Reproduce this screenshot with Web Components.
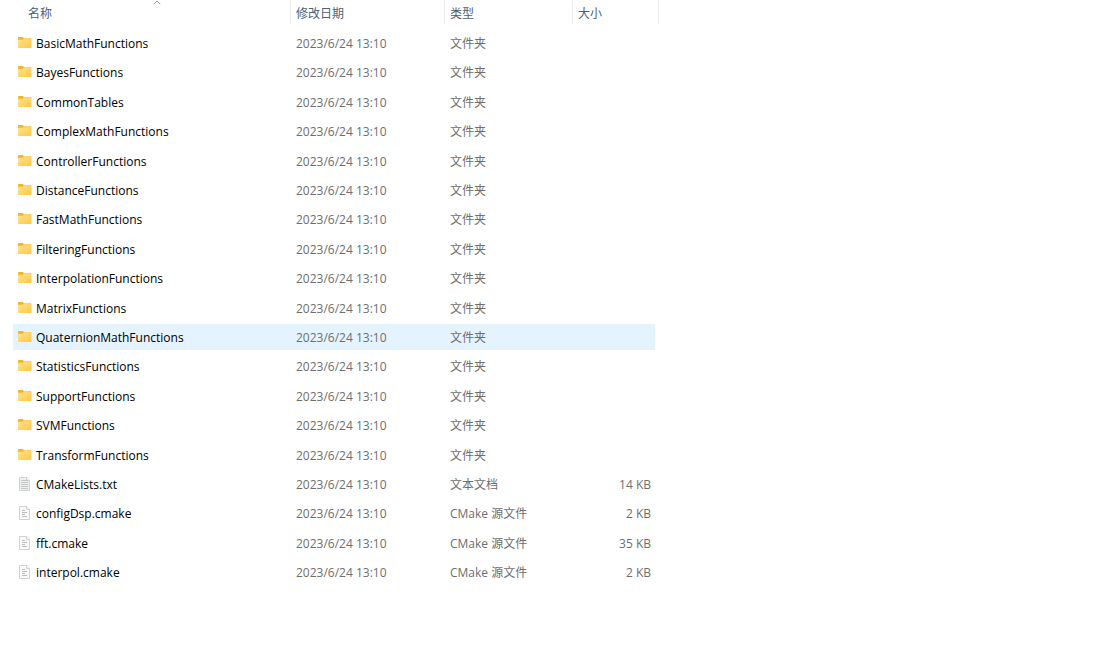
<!DOCTYPE html>
<html lang="zh-CN">
<head>
<meta charset="utf-8">
<title>Source</title>
<style>
  body { margin: 0; background: #fff; font: 12px/24px "Open Sans", "Noto Sans CJK SC", sans-serif; color: #6e6e6e; }
</style>
</head>
<body>
<file-list></file-list>
<script>
  // Icon for a folder, a text document or a source file.
  class FileIcon extends HTMLElement {
    connectedCallback() {
      const lines = {
        text: '<path d="M3 3.500h7M3 5.500h7M3 7.500h7M3 9.500h7M3 11.500h7" stroke="#c4c6c7"/>',
        source: '<path d="M4 4.500h3M4 6.500h5M4 8.500h3M4 10.500h5" stroke="#b9bdc0"/>'
      };
      const kind = this.getAttribute('kind');
      const art = kind === 'folder'
        ? `<defs><linearGradient id="g" x1="0" y1="0" x2="1" y2="1"><stop stop-color="#ffe395"/><stop offset="1" stop-color="#ffc83f"/></linearGradient></defs>
           <path d="M0 1.800Q0 1 .8 1H4.500L6 2H13V6H0z" fill="#f6b422"/>
           <path d="M0 3.800H4.600L6 2.200H12.800Q13.500 2.200 13.500 3V11.200Q13.500 12 12.700 12H.8Q0 12 0 11.200z" fill="url(#g)"/>`
        : `<path d="M1.500.5H8.700L11.500 3.300V13.500H1.500z" fill="${kind === 'text' ? '#eeefef' : '#fafafa'}" stroke="#cfd1d2"/>
           <path d="M8.700.5V3.300H11.500" fill="#fff" stroke="#c9cbcc"/>${lines[kind]}`;
      this.attachShadow({ mode: 'open' }).innerHTML = `
        <style>:host { display: block; flex: none; width: 14px; height: 14px; } svg { display: block; }</style>
        <svg width="14" height="14" viewBox="0 0 14 14" fill="none" aria-hidden="true">${art}</svg>`;
    }
  }
  customElements.define('file-icon', FileIcon);

  // Icon and name side by side.
  class FileName extends HTMLElement {
    connectedCallback() {
      this.attachShadow({ mode: 'open' }).innerHTML = `
        <style>
          :host { display: flex; align-items: center; gap: 4px; color: #000; white-space: nowrap; }
          file-icon { margin-bottom: 2px; }
        </style>
        <file-icon kind="${this.getAttribute('kind')}"></file-icon><span><slot></slot></span>`;
    }
  }
  customElements.define('file-name', FileName);

  // Clickable column title, with an arrow over the sorted one.
  class ColumnTitle extends HTMLElement {
    connectedCallback() {
      this.attachShadow({ mode: 'open' }).innerHTML = `
        <style>
          :host { display: block; border-right: 1px solid #ececec; }
          button { position: relative; display: block; width: 100%; height: 24px; margin: 0; padding: 4px 5px 0;
                   border: 0; background: none; font: inherit; line-height: 20px; color: #4c607a; text-align: left; }
          svg { position: absolute; top: 0; left: 50%; margin-left: -4px; }
        </style>
        <button type="button"><slot></slot>${this.hasAttribute('sorted')
          ? '<svg width="8" height="5" viewBox="0 0 8 5" fill="none" aria-hidden="true"><path d="M.8 4.200L4 .9L7.200 4.200" stroke="#9a9a9a"/></svg>' : ''}</button>`;
    }
  }
  customElements.define('column-title', ColumnTitle);

  const folders = ['BasicMathFunctions', 'BayesFunctions', 'CommonTables', 'ComplexMathFunctions', 'ControllerFunctions',
    'DistanceFunctions', 'FastMathFunctions', 'FilteringFunctions', 'InterpolationFunctions', 'MatrixFunctions',
    'QuaternionMathFunctions', 'StatisticsFunctions', 'SupportFunctions', 'SVMFunctions', 'TransformFunctions'];
  const files = [
    ...folders.map(name => ['folder', name, '文件夹', '']),
    ['text', 'CMakeLists.txt', '文本文档', '14 KB'],
    ['source', 'configDsp.cmake', 'CMake 源文件', '2 KB'],
    ['source', 'fft.cmake', 'CMake 源文件', '35 KB'],
    ['source', 'interpol.cmake', 'CMake 源文件', '2 KB']
  ];

  class FileList extends HTMLElement {
    connectedCallback() {
      const rows = files.map(([kind, name, type, size]) => `
        <tr${name === 'QuaternionMathFunctions' ? ' class="hover"' : ''}>
          <td><file-name kind="${kind}">${name}</file-name></td>
          <td>2023/6/24 13:10</td><td>${type}</td><td class="size">${size}</td>
        </tr>`).join('');
      this.attachShadow({ mode: 'open' }).innerHTML = `
        <style>
          :host { display: block; padding: 0 13px; overflow-x: auto; }
          table { table-layout: fixed; width: 0; border-spacing: 0; }
          .c-name { width: 278px; } .c-date { width: 154px; } .c-type { width: 128px; } .c-size { width: 86px; }
          th { padding: 0 0 4px; font-weight: normal; }
          th:first-child { padding-left: 10px; }
          td { padding: 2px 5px 0; border: 0 solid transparent; border-width: 2px 0 1px; background-clip: padding-box;
               white-space: nowrap; }
          tr:nth-child(5n+2) td, tr:nth-child(5n+4) td { border-bottom-width: 2px; }
          .size { text-align: right; padding-right: 4px; border-right-width: 4px; }
          .hover td { background-color: #e5f3ff; }
        </style>
        <table>
          <colgroup><col class="c-name"><col class="c-date"><col class="c-type"><col class="c-size"></colgroup>
          <thead><tr>
            <th aria-sort="ascending"><column-title sorted>名称</column-title></th>
            <th><column-title>修改日期</column-title></th>
            <th><column-title>类型</column-title></th>
            <th><column-title>大小</column-title></th>
          </tr></thead>
          <tbody>${rows}</tbody>
        </table>`;
    }
  }
  customElements.define('file-list', FileList);
</script>
</body>
</html>
